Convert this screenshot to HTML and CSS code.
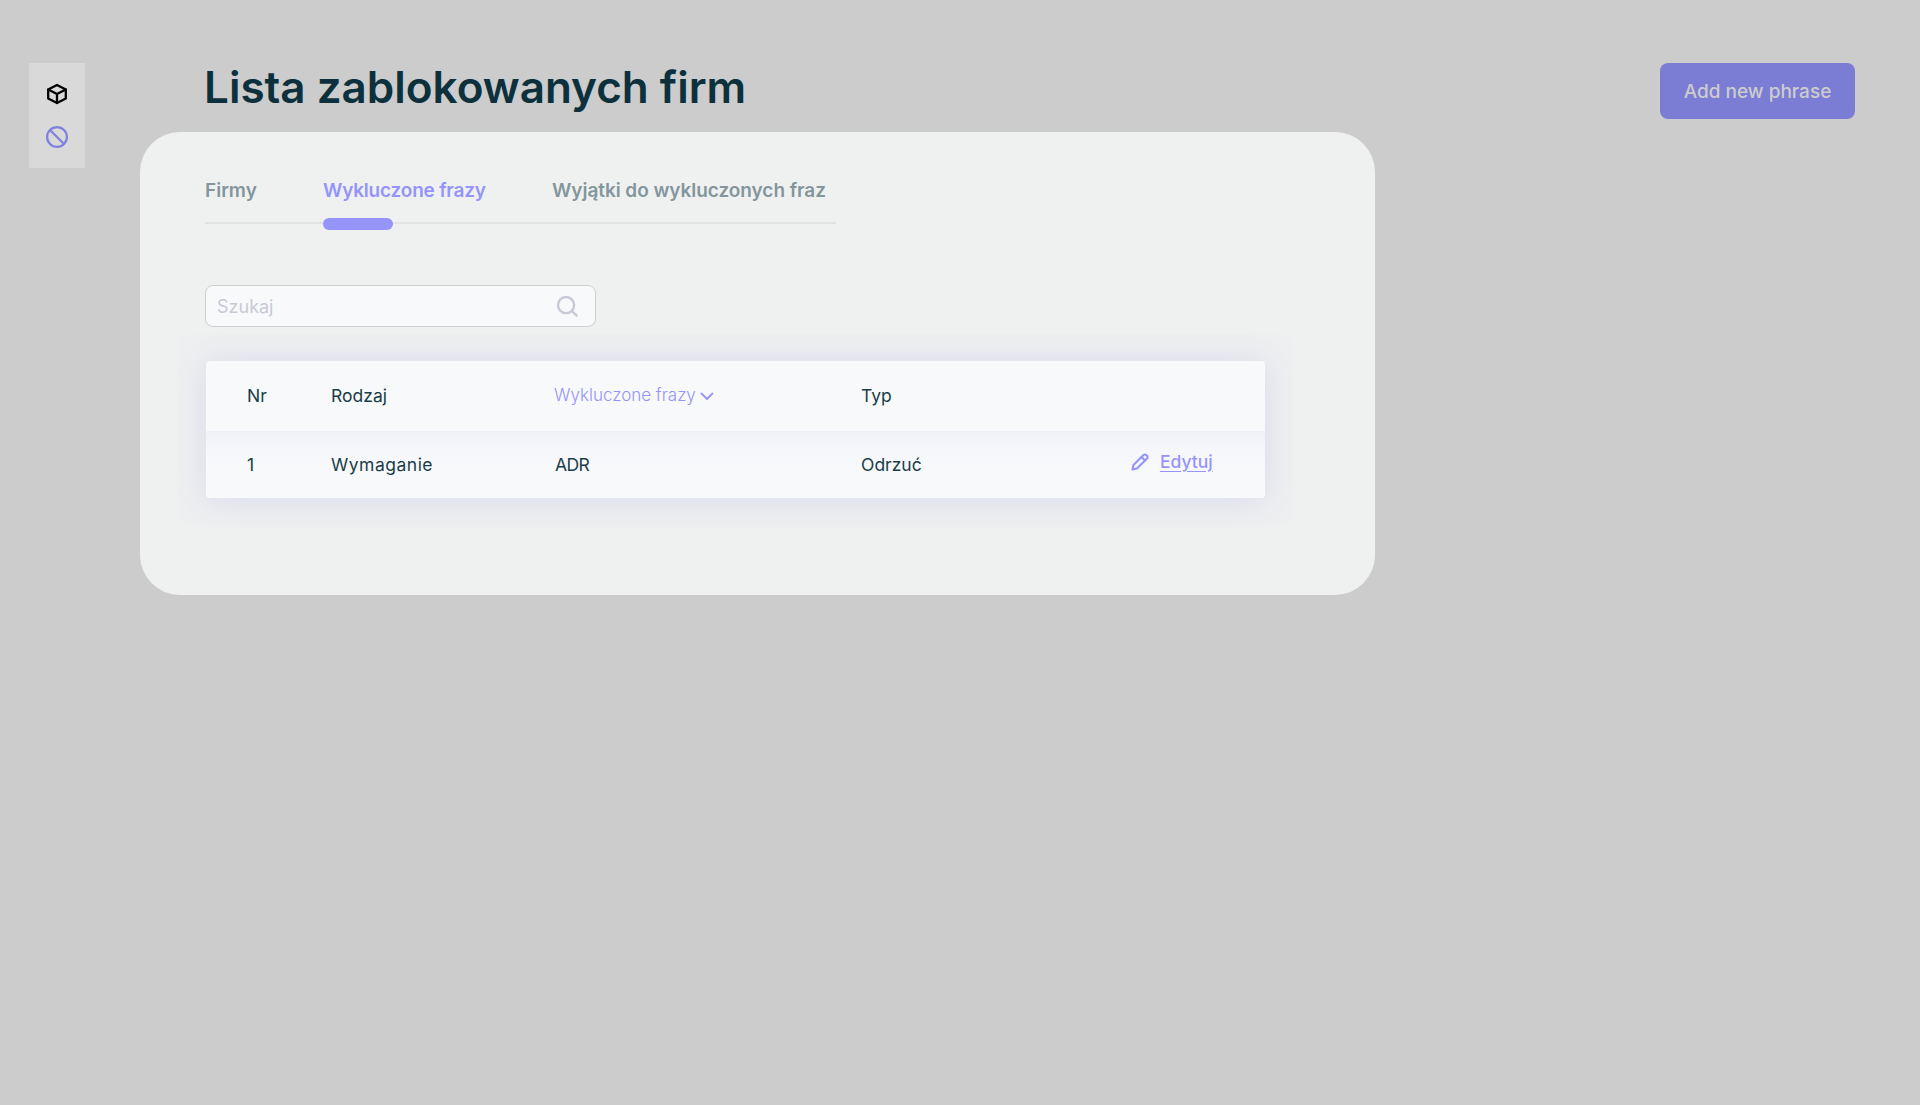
FILE: index.html
```html
<!DOCTYPE html>
<html lang="pl">
<head>
<meta charset="utf-8">
<title>Lista zablokowanych firm</title>
<link rel="stylesheet" href="styles.css">
</head>
<body>
<div class="page">
  <nav class="rail">
    <svg class="rail-icon" viewBox="0 0 24 24" fill="none" stroke="#000" stroke-width="2.3" stroke-linejoin="round" stroke-linecap="round"><path d="M12 3 20.800 7.500v9L12 21 3.200 16.500v-9z"/><path d="M3.200 7.500 12 12l8.800-4.500M12 12v9"/></svg>
    <svg class="rail-icon" viewBox="0 0 24 24" fill="none" stroke="#8082e0" stroke-width="2.300"><circle cx="12" cy="12" r="9.900"/><path d="M5 5l14 14"/></svg>
  </nav>
  <main class="content">
    <header class="head">
      <h1 class="title">Lista zablokowanych firm</h1>
      <button class="add-btn" type="button">Add new phrase</button>
    </header>
    <section class="panel">
      <div class="tabs">
        <a class="tab tab-a">Firmy</a>
        <a class="tab tab-b active">Wykluczone frazy</a>
        <a class="tab tab-c">Wyjątki do wykluczonych fraz</a>
      </div>
      <div class="search">
        <span class="search-text">Szukaj</span>
        <svg class="search-icon" viewBox="0 0 24 24" fill="none" stroke="#c9c9d6" stroke-width="2.600" stroke-linecap="round"><circle cx="11" cy="11" r="8.800"/><path d="M17.500 17.500 22.500 22.500"/></svg>
      </div>
      <div class="table">
        <div class="row row-head">
          <span class="cell c-nr">Nr</span>
          <span class="cell c-kind">Rodzaj</span>
          <span class="cell c-phrase sort">Wykluczone frazy<svg class="chev" viewBox="0 0 14 9" fill="none" stroke="#9494fb" stroke-width="1.800" stroke-linecap="round" stroke-linejoin="round"><path d="M1.500 1.500 7 7l5.500-5.500"/></svg></span>
          <span class="cell c-type">Typ</span>
        </div>
        <div class="row row-body">
          <span class="cell c-nr">1</span>
          <span class="cell c-kind c-wide">Wymaganie</span>
          <span class="cell c-phrase">ADR</span>
          <span class="cell c-type">Odrzuć</span>
          <a class="edit"><svg class="pencil" viewBox="0 0 18 18" fill="none" stroke="#9494fb" stroke-width="2.100" stroke-linejoin="round" stroke-linecap="round"><path d="M1.500 16.500 2.500 12 12.500 2a1.900 1.900 0 0 1 2.700 0l.8.8a1.900 1.900 0 0 1 0 2.700L6 15.500z"/><path d="M10.500 4l3.500 3.500"/></svg><span class="edit-text">Edytuj</span></a>
        </div>
      </div>
    </section>
  </main>
</div>
</body>
</html>
```
FILE: styles.css
```css
* { box-sizing: border-box; }
html, body { margin: 0; height: 100%; overflow: hidden; }
body {
  background: #ccc;
  font-family: Inter, "Open Sans", "Liberation Sans", sans-serif;
  color: #0c313d;
}
.page {
  display: flex;
  align-items: flex-start;
  padding: 63px 65px 0 29px;
}
.rail {
  width: 56px;
  height: 105px;
  background: #d9d9d9;
  display: flex;
  flex-direction: column;
  align-items: center;
  gap: 19px;
  padding-top: 19px;
  flex: none;
}
.rail-icon { width: 24px; height: 24px; flex: none; }
.content { flex: 1; margin-left: 55px; }
.head {
  display: flex;
  justify-content: space-between;
  align-items: flex-start;
  height: 69px;
}
.title {
  margin: 0 0 0 64px;
  font-size: 44px;
  line-height: 48px;
  font-weight: 600;
  color: #0c313d;
}
.add-btn {
  width: 195px;
  height: 56px;
  border: 0;
  border-radius: 8px;
  background: #7b7dd5;
  color: #ccc;
  font: 500 19px/57px Inter, "Open Sans", sans-serif;
  padding: 0;
}
.panel {
  width: 1235px;
  height: 463px;
  background: #eff1f0;
  border-radius: 40px;
  padding: 44px 65px 0;
}
.tabs {
  display: flex;
  position: relative;
  width: 631px;
  height: 48px;
  padding-top: 1px;
  border-bottom: 2px solid #e1e3e3;
}
.tab {
  font-size: 19px;
  line-height: 28px;
  font-weight: 600;
  color: #83969c;
  white-space: nowrap;
}
.tab-a { width: 118px; }
.tab-b { width: 229px; letter-spacing: -.2px; }
.tab-c { letter-spacing: -.05px; }
.tab.active { color: #9494fb; }
.tab.active::after {
  content: "";
  position: absolute;
  left: 118px;
  bottom: -8px;
  width: 70px;
  height: 12px;
  border-radius: 6px;
  background: #9494fb;
}
.search {
  width: 391px;
  height: 42px;
  margin-top: 61px;
  border: 1px solid #cdd0d0;
  border-radius: 8px;
  background: #f8f9fb;
  display: flex;
  align-items: center;
  justify-content: space-between;
  padding: 0 17px 0 11px;
}
.search-text { font-size: 18px; color: #c9c9d6; }
.search-icon { width: 22px; height: 22px; }
.table {
  width: 1059px;
  margin: 34px 0 0 1px;
  border-radius: 4px;
  background: #f8f9fb;
  box-shadow: 0 2px 32px rgba(100, 100, 210, .14), 0 0 0 28px rgba(120, 120, 220, .012);
}
.row { display: flex; align-items: center; font-size: 17.500px; }
.row-head { height: 70px; padding-bottom: 2px; }
.row-body {
  height: 67px;
  padding-bottom: 1px;
  background: linear-gradient(#f0f1f8, #f6f7fb 30%, #f8f9fb 60%);
  border-radius: 0 0 4px 4px;
}
.cell { display: block; white-space: nowrap; color: #1a3d48; }
.c-nr { width: 125px; padding-left: 41px; }
.c-kind { width: 223px; }
.c-wide { letter-spacing: .5px; }
.c-phrase { width: 307px; }
.c-type { width: 200px; }
.row-body .c-phrase { padding-left: 1px; letter-spacing: -.6px; }
.sort { color: #9494fb; display: flex; align-items: center; gap: 4px; font-weight: 300; font-size: 17px; }
.chev { width: 14px; height: 9px; margin-top: 2px; }
.edit {
  display: flex;
  align-items: center;
  gap: 11px;
  margin: -5px 0 0 70px;
  color: #9494fb;
  font-weight: 500;
}
.pencil { width: 18px; height: 18px; }
.edit-text { text-decoration: underline; text-underline-offset: 3px; }
```
